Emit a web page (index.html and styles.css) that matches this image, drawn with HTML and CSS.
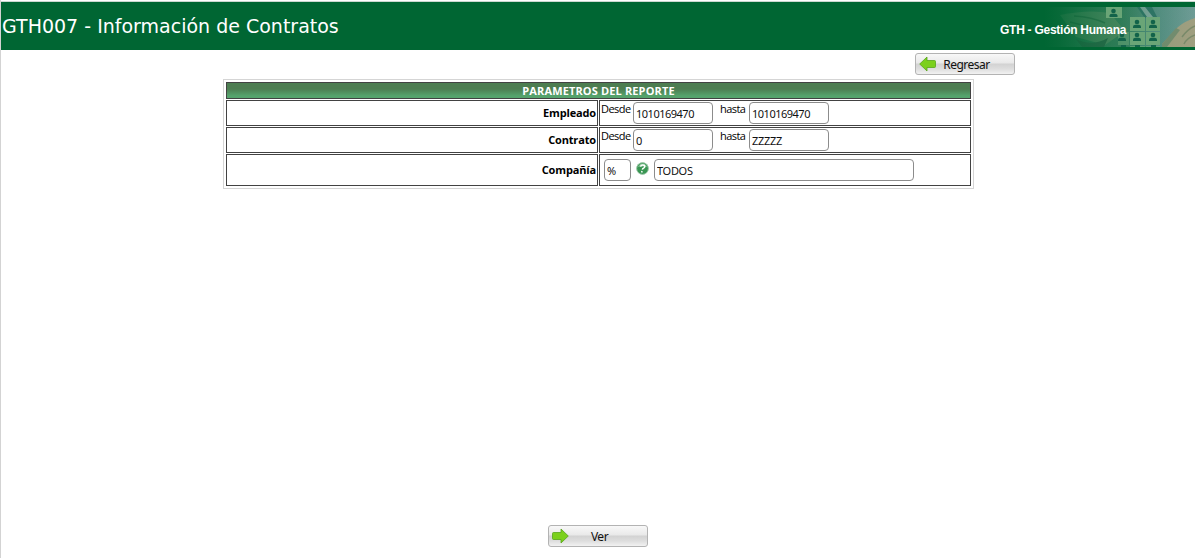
FILE: index.html
```html
<!DOCTYPE html>
<html lang="es">
<head>
    <meta charset="UTF-8">
    <title>GTH007 - Información de Contratos</title>
    <link rel="stylesheet" href="styles.css">
</head>
<body>
    <div class="encabezado">
        <h1>GTH007 - Información de Contratos</h1>
        <div class="banner">
            <svg class="banner-fondo" width="195" height="40" viewBox="0 0 195 40">
                <defs>
                    <linearGradient id="verde" x1="0" x2="1">
                        <stop offset="0" stop-color="#006633"/>
                        <stop offset="0.1" stop-color="#006633" stop-opacity="0.8"/>
                        <stop offset="0.45" stop-color="#1b7448" stop-opacity="0.45"/>
                        <stop offset="0.7" stop-color="#1b7448" stop-opacity="0.1"/>
                        <stop offset="1" stop-color="#1b7448" stop-opacity="0"/>
                    </linearGradient>
                    <linearGradient id="tela" x1="0" x2="1">
                        <stop offset="0" stop-color="#1f7549"/>
                        <stop offset="0.5" stop-color="#39805f"/>
                        <stop offset="0.75" stop-color="#568f83"/>
                        <stop offset="1" stop-color="#6f9c96"/>
                    </linearGradient>
                    <g id="persona">
                        <circle cx="6" cy="3" r="2.3"/>
                        <path d="M2 9V7.5Q2 6 4.500 5.800h3Q10 6 10 7.500V9z"/>
                    </g>
                </defs>
                <rect width="195" height="40" fill="#006633"/>
                <rect x="44" width="151" height="40" fill="url(#tela)"/>
                <path d="M60 8Q88 2 110 6L125 24 105 38 76 30z" fill="#5c8f68"/>
                <path d="M76 32Q92 40 108 31L104 40H82z" fill="#2c6146"/>
                <path d="M74 9Q92 10 105 16M70 15l20 5" fill="none" stroke="#36704c" stroke-width="1.500"/>
                <path d="M137 0h15l5 10-3 4-10-4z" fill="#2f7467"/>
                <path d="M140 0h5l8 10h-6z" fill="#7fa69c"/>
                <path d="M195 11Q185 14 178 20L162 37v3h33z" fill="#a09f80"/>
                <path d="M195 19Q188 22 182 30M195 28Q187 31 184 37" fill="none" stroke="#7b8a6a" stroke-width="1.500"/>
                <path d="M162 37l14-16 4 2-13 17h-5z" fill="#768d70"/>
                <rect x="44" width="151" height="40" fill="url(#verde)"/>
                <g fill="#6aa577">
                    <path d="M106 0h16v11h-16zM130 10h15v14h-15zM146 10h14v14h-14zM130 25h15v13h-15zM146 25h14v13h-14z"/>
                    <path d="M118 25h11v13h-11z" fill-opacity="0.5"/>
                    <path d="M130 39h15v1h-15zM146 39h14v1h-14z" fill-opacity="0.7"/>
                </g>
                <g fill="#12634a">
                    <use href="#persona" x="107.500" y="1"/>
                    <use href="#persona" x="131" y="12"/>
                    <use href="#persona" x="147" y="12"/>
                    <use href="#persona" x="116" y="25"/>
                    <use href="#persona" x="131" y="25"/>
                    <use href="#persona" x="147" y="25"/>
                    <path d="M121 40v-2h5v2zM135 40v-2h5v2zM151 40v-2h5v2z"/>
                </g>
            </svg>
            <span class="banner-titulo">GTH - Gestión Humana</span>
        </div>
    </div>
    <div class="contenido">
        <div class="acciones">
            <button type="button" class="boton">
                <svg class="flecha" width="17" height="16" viewBox="0 0 17 16"><path d="M.7 8L8 1v3.500h7.500q1 0 1 1v5q0 1-1 1H8V15z"/></svg>
                <span>Regresar</span>
            </button>
        </div>
        <div class="parametros">
            <div class="titulo">PARAMETROS DEL REPORTE</div>
            <div class="fila">
                <div class="etiqueta"><span>Empleado</span></div>
                <div class="valor">
                    <label class="desde">Desde</label>
                    <input class="rango" type="text" value="1010169470">
                    <label class="hasta">hasta</label>
                    <input class="rango" type="text" value="1010169470">
                </div>
            </div>
            <div class="fila">
                <div class="etiqueta"><span>Contrato</span></div>
                <div class="valor">
                    <label class="desde">Desde</label>
                    <input class="rango" type="text" value="0">
                    <label class="hasta">hasta</label>
                    <input class="rango texto" type="text" value="ZZZZZ">
                </div>
            </div>
            <div class="fila fila-compania">
                <div class="etiqueta"><span>Compañía</span></div>
                <div class="valor valor-compania">
                    <input class="codigo" type="text" value="%">
                    <svg class="ayuda" width="13" height="13" viewBox="0 0 13 13">
                        <circle cx="6.500" cy="6.500" r="5.900" fill="#399653" stroke="#a2c9ac"/>
                        <path d="M2 5Q3 1.500 6.500 1.500T11 5Q6 4 2 5z" fill="#7fbe90"/>
                        <path d="M4.600 4.700Q4.800 3 6.800 3T8.800 4.700Q8.700 5.500 7.600 6.100 6.500 6.600 6.300 7.700M6 9l-.3 1.500" fill="none" stroke="#fff" stroke-width="1.500"/>
                    </svg>
                    <input class="nombre texto" type="text" value="TODOS">
                </div>
            </div>
        </div>
        <div class="pie">
            <button type="button" class="boton">
                <svg class="flecha" width="17" height="16" viewBox="0 0 17 16"><path d="M16.300 8L9 1v3.500H1.500q-1 0-1 1v5q0 1 1 1H9V15z"/></svg>
                <span>Ver</span>
            </button>
        </div>
    </div>
</body>
</html>
```

FILE: styles.css
```css
* {
    box-sizing: border-box;
}
body {
    margin: 0;
    height: 558px;
    overflow: hidden;
    padding-top: 1px;
    border-left: 1px solid #d3d3d3;
    background-color: #fff;
    color: #000;
    font-family: "Open Sans", "Noto Sans", sans-serif;
    display: flex;
    flex-direction: column;
}
.encabezado {
    height: 49px;
    flex: none;
    border-top: 1px solid #ccd8d1;
    background-color: #006633;
    display: flex;
    justify-content: space-between;
}
.encabezado h1 {
    margin: 0;
    padding: 12px 0 0 1px;
    font-family: "DejaVu Sans", sans-serif;
    font-size: 19px;
    font-weight: normal;
    line-height: 24px;
    color: #fff;
    white-space: nowrap;
}
.banner {
    width: 195px;
    height: 40px;
    margin-top: 5px;
    position: relative;
}
.banner-fondo {
    display: block;
}
.banner-titulo {
    position: absolute;
    left: 0;
    top: 15px;
    font: bold 12px/16px "Liberation Sans", sans-serif;
    letter-spacing: -0.26px;
    color: #fff;
    white-space: nowrap;
}
.contenido {
    flex: 1;
    display: flex;
    flex-direction: column;
    align-items: center;
    padding-top: 3px;
}
.acciones {
    width: 100%;
    padding-right: 180px;
    display: flex;
    justify-content: flex-end;
}
.boton {
    width: 100px;
    height: 22px;
    padding: 0 17px 0 3px;
    display: flex;
    align-items: center;
    border: 1px solid #b3b3b3;
    border-radius: 3px;
    background: linear-gradient(#f8f8f8 0%, #e9e9e9 45%, #d2d2d2 50%, #dedede 75%, #f2f2f2 100%);
    font-family: "Noto Sans", sans-serif;
    font-size: 12px;
    letter-spacing: -0.5px;
    color: #111;
}
.boton span {
    flex: 1;
    text-align: center;
    padding-top: 1px;
}
.flecha {
    flex: none;
    fill: #7bd01c;
    stroke: #56a51b;
    stroke-width: 0.8;
}
.parametros {
    width: 751px;
    height: 110px;
    margin: 4px 0 0 1px;
    padding: 2px;
    border: 1px solid #d5d5d5;
    display: flex;
    flex-direction: column;
    gap: 1px;
}
.titulo {
    height: 17px;
    border: 1px solid #424242;
    background: linear-gradient(#4d7d51 0%, #4d7d51 40%, #55a36c 85%);
    color: #fff;
    font-size: 11px;
    font-weight: bold;
    letter-spacing: 0.14px;
    line-height: 16px;
    text-align: center;
}
.fila {
    height: 26px;
    display: grid;
    grid-template-columns: 372px 372px;
    gap: 1px;
}
.fila-compania {
    height: 32px;
}
.etiqueta,
.valor {
    border: 1px solid #424242;
    display: flex;
}
.etiqueta {
    justify-content: flex-end;
    align-items: center;
    padding: 0 1px 2px 0;
    font-size: 11px;
    font-weight: bold;
    letter-spacing: -0.15px;
}
.valor {
    padding: 1px 0 0 1px;
}
.valor label {
    font-size: 11px;
    letter-spacing: -0.55px;
    line-height: 14px;
}
.desde {
    width: 32px;
}
.hasta {
    width: 36px;
    padding-left: 7px;
}
.valor input {
    height: 22px;
    padding: 1px 2px 0;
    border: 1px solid #8c8c8c;
    border-radius: 4px;
    background-color: #fff;
    font-family: "Noto Sans", sans-serif;
    font-size: 11px;
    letter-spacing: -0.5px;
    color: #111;
}
.valor .rango {
    width: 80px;
}
.valor .texto {
    letter-spacing: -0.3px;
}
.valor-compania {
    padding: 4px 0 0 4px;
}
.valor .codigo {
    width: 27px;
}
.ayuda {
    margin: 3px 5px 0 5px;
}
.valor .nombre {
    width: 260px;
}
.pie {
    margin-top: auto;
    padding-bottom: 11px;
}
```
